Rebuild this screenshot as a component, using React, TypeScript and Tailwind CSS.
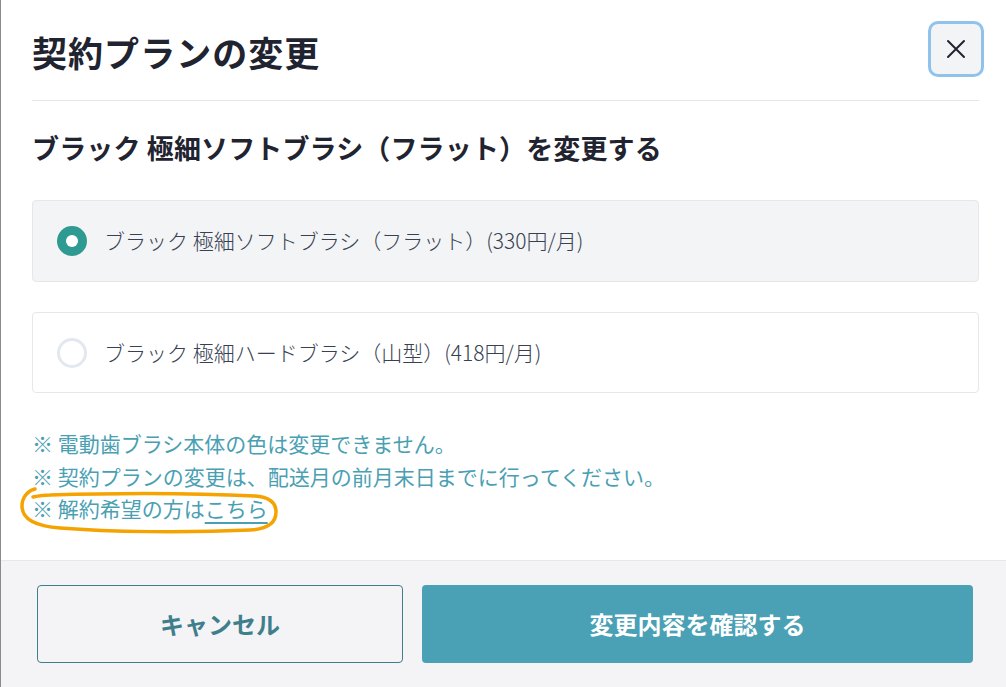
import React from "react";

const font = { fontFamily: '"Noto Sans CJK JP", "Noto Sans", sans-serif' };

export default function App() {
  return (
    <div className="relative w-[1006px] h-[687px] bg-white overflow-hidden border-l border-[#8a8a8a] flex flex-col" style={font}>
      <div className="flex-1 pl-[31px] pr-[27px]">
        <div className="flex items-center justify-between h-[101px] border-b border-[#e5e7eb]">
          <h1 className="text-[35px] font-bold text-[#1f2430] tracking-[0.03em] leading-none pt-[2px]">契約プランの変更</h1>
          <button className="w-[56px] h-[56px] mr-[-5px] mt-[-2px] rounded-[10px] bg-[#f3f4f6] border-[3px] border-[#90c3ec] flex items-center justify-center">
            <svg width="22" height="22" viewBox="0 0 22 22" fill="none" stroke="#1f2430" strokeWidth="2" strokeLinecap="round">
              <path d="M3 3L19 19M19 3L3 19" />
            </svg>
          </button>
        </div>
        <h2 className="mt-[33px] text-[27px] font-bold text-[#1f2430] leading-none tracking-[0.005em]">ブラック 極細ソフトブラシ（フラット）を変更する</h2>
        <div className="mt-[39px] flex flex-col gap-[30px]">
          <div className="h-[82px] rounded-[4px] border border-[#e5e7eb] bg-[#f3f4f6] flex items-center pl-[24px]">
            <span className="w-[30px] h-[30px] rounded-full bg-[#2f9a92] flex items-center justify-center">
              <span className="w-[12px] h-[12px] rounded-full bg-white" />
            </span>
            <span className="ml-[17px] text-[21px] font-light text-[#374151]">ブラック 極細ソフトブラシ（フラット）(330円/月)</span>
          </div>
          <div className="h-[81px] rounded-[4px] border border-[#e5e7eb] bg-white flex items-center pl-[24px]">
            <span className="w-[30px] h-[30px] rounded-full border-[3px] border-[#e2e8f0] bg-white" />
            <span className="ml-[17px] text-[21px] font-light text-[#374151]">ブラック 極細ハードブラシ（山型）(418円/月)</span>
          </div>
        </div>
        <div className="mt-[34px] text-[21px] leading-[32.5px] text-[#4aa0b3]">
          <p>※ 電動歯ブラシ本体の色は変更できません。</p>
          <p>※ 契約プランの変更は、配送月の前月末日までに行ってください。</p>
          <p>※ 解約希望の方は<span className="underline decoration-2 underline-offset-[5px]">こちら</span></p>
        </div>
      </div>
      <div className="h-[127px] border-t border-[#e5e7eb] bg-[#f4f4f6] flex items-center pl-[36px] pr-[33px] gap-[19px]">
        <button className="w-[366px] h-[78px] rounded-[4px] border border-[#3f7f8c] text-[24px] font-bold text-[#3f7f8c]">キャンセル</button>
        <button className="w-[551px] h-[78px] rounded-[4px] bg-[#4aa0b4] text-[24px] font-bold text-white">変更内容を確認する</button>
      </div>
      <svg className="absolute left-[14px] top-[484px] pointer-events-none" width="270" height="54" viewBox="0 0 270 54" fill="none">
        <path d="M20 5 C12 7 7 14 7 22 C7 34 18 42 45 44 C95 48 170 49 235 46 C253 45 261 38 261 28 C261 18 254 13 240 12 C180 9 100 9 35 11 C28 11 23 12 18 13" stroke="#f5a300" strokeWidth="3.5" strokeLinecap="round" strokeLinejoin="round" />
      </svg>
    </div>
  );
}
